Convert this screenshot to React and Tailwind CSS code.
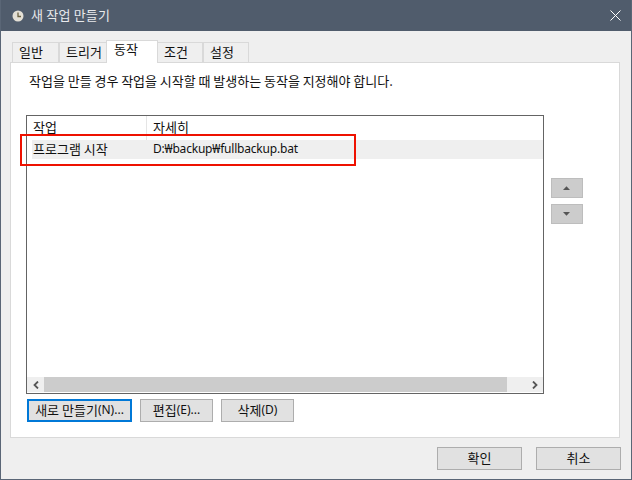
const tabs = [
  { label: '일반', w: 'w-[47px]' },
  { label: '트리거', w: 'w-[48px]' },
  { label: '동작', w: 'w-[52px]', active: true },
  { label: '조건', w: 'w-[46px]' },
  { label: '설정', w: 'w-[46px]' },
];

function Tab({ label, w, active }) {
  if (active) {
    return (
      <div className={`${w} h-[23px] -mx-px -mb-px relative z-10 bg-white border border-b-0 border-[#d9d9d9] pl-[7px] leading-[16px]`}>
        {label}
      </div>
    );
  }
  return (
    <div className={`${w} h-[20px] border border-b-0 border-[#d9d9d9] bg-[#efefef] pl-[6px] leading-[17px]`}>
      {label}
    </div>
  );
}

function Latin({ children, className }) {
  return <span className={`text-[12px] font-['Noto_Sans'] ${className}`}>{children}</span>;
}

function Btn({ children, className }) {
  return (
    <button className={`h-[23px] pb-px bg-[#e1e1e1] border text-[13px] leading-[20px] text-[#111] flex items-center justify-center ${className}`}>
      {children}
    </button>
  );
}

function Arrow({ up }) {
  return (
    <div className="w-[32px] h-[20px] bg-[#cccccc] border border-[#bdbdbd] flex items-center justify-center">
      <svg width="7" height="4" viewBox="0 0 7 4" className="-ml-px">
        <path d={up ? 'M0 4h7L3.5 0.3z' : 'M0 0h7L3.5 3.7z'} fill="#555" />
      </svg>
    </div>
  );
}

export default function App() {
  return (
    <div className="w-[632px] h-[480px] bg-[#efefef] border border-t-0 border-[#5a6676] flex flex-col text-[13px] text-[#111] overflow-hidden" style={{ fontFamily: '"Noto Sans CJK KR", sans-serif' }}>
      {/* title bar */}
      <div className="h-[31px] bg-[#505c6c] -mx-px flex items-center shrink-0 pl-[12px] pr-[11px] text-white">
        <svg width="12" height="12" viewBox="0 0 12 12">
          <circle cx="6" cy="6" r="5.5" fill="#e4e0d6" />
          <path d="M6 2.5V6.5H9" fill="none" stroke="#6b6242" strokeWidth="1.3" />
        </svg>
        <span className="ml-[7px] text-[#e8eaec] leading-[18px] -mt-px tracking-[0.2px]">새 작업 만들기</span>
        <svg width="11" height="11" viewBox="0 0 11 11" className="ml-auto">
          <path d="M0.5 0.5L10.5 10.5M10.5 0.5L0.5 10.5" stroke="#fff" strokeWidth="1" fill="none" />
        </svg>
      </div>

      {/* tabs */}
      <div className="flex items-end h-[31px] pl-[11px] shrink-0 relative z-10">
        {tabs.map((t) => (
          <Tab key={t.label} {...t} />
        ))}
      </div>

      {/* panel */}
      <div className="ml-[9px] mr-[11px] h-[376px] bg-white border border-[#d9d9d9] flex flex-col shrink-0 relative">
        <p className="ml-[18px] mt-[8px] h-[20px] leading-[20px] [word-spacing:-0.1px]">작업을 만들 경우 작업을 시작할 때 발생하는 동작을 지정해야 합니다.</p>

        <div className="flex mt-[24px] ml-[15px]">
          {/* list */}
          <div className="w-[518px] h-[279px] border border-[#646464] flex flex-col">
            <div className="flex h-[24px] shrink-0 leading-[21px]">
              <div className="w-[120px] pl-[6px] border-r border-[#e5e5e5]">작업</div>
              <div className="pl-[6px]">자세히</div>
            </div>
            <div className="flex h-[19px] ml-[5px] bg-[#efefef] leading-[18px] shrink-0">
              <div className="w-[121px] pl-px">프로그램 시작</div>
              <Latin className="tracking-[-0.2px]">D:₩backup₩fullbackup.bat</Latin>
            </div>
            <div className="flex-1" />
            <div className="h-[15px] flex bg-[#efefef] shrink-0 mb-px items-center">
              <div className="w-[17px] flex justify-center text-[#555]">
                <svg width="6" height="8" viewBox="0 0 6 8"><path d="M5 0.5L1.5 4L5 7.5" fill="none" stroke="#555" strokeWidth="1.8" /></svg>
              </div>
              <div className="w-[463px] h-full bg-[#cccccc]" />
              <div className="flex-1 flex justify-end pr-[5px]">
                <svg width="6" height="8" viewBox="0 0 6 8"><path d="M1 0.5L4.5 4L1 7.5" fill="none" stroke="#555" strokeWidth="1.8" /></svg>
              </div>
            </div>
          </div>

          {/* move buttons */}
          <div className="ml-[7px] mt-[63px] flex flex-col gap-[6px]">
            <Arrow up />
            <Arrow />
          </div>
        </div>

        <div className="flex mt-[5px] ml-[16px] gap-[8px]">
          <Btn className="w-[105px] border-2 border-[#0078d7]">새로 만들기<Latin>(N)...</Latin></Btn>
          <Btn className="w-[73px] border-[#adadad]">편집<Latin>(E)...</Latin></Btn>
          <Btn className="w-[73px] border-[#adadad]">삭제<Latin>(D)</Latin></Btn>
        </div>

        {/* red highlight drawn over the row */}
        <div className="absolute left-[9px] top-[71px] w-[336px] h-[32px] border-2 border-[#ee1100]" />
      </div>

      {/* footer */}
      <div className="flex justify-end gap-[14px] mt-[9px] mr-[10px]">
        <Btn className="w-[85px] border-[#adadad]">확인</Btn>
        <Btn className="w-[85px] border-[#adadad]">취소</Btn>
      </div>
    </div>
  );
}
